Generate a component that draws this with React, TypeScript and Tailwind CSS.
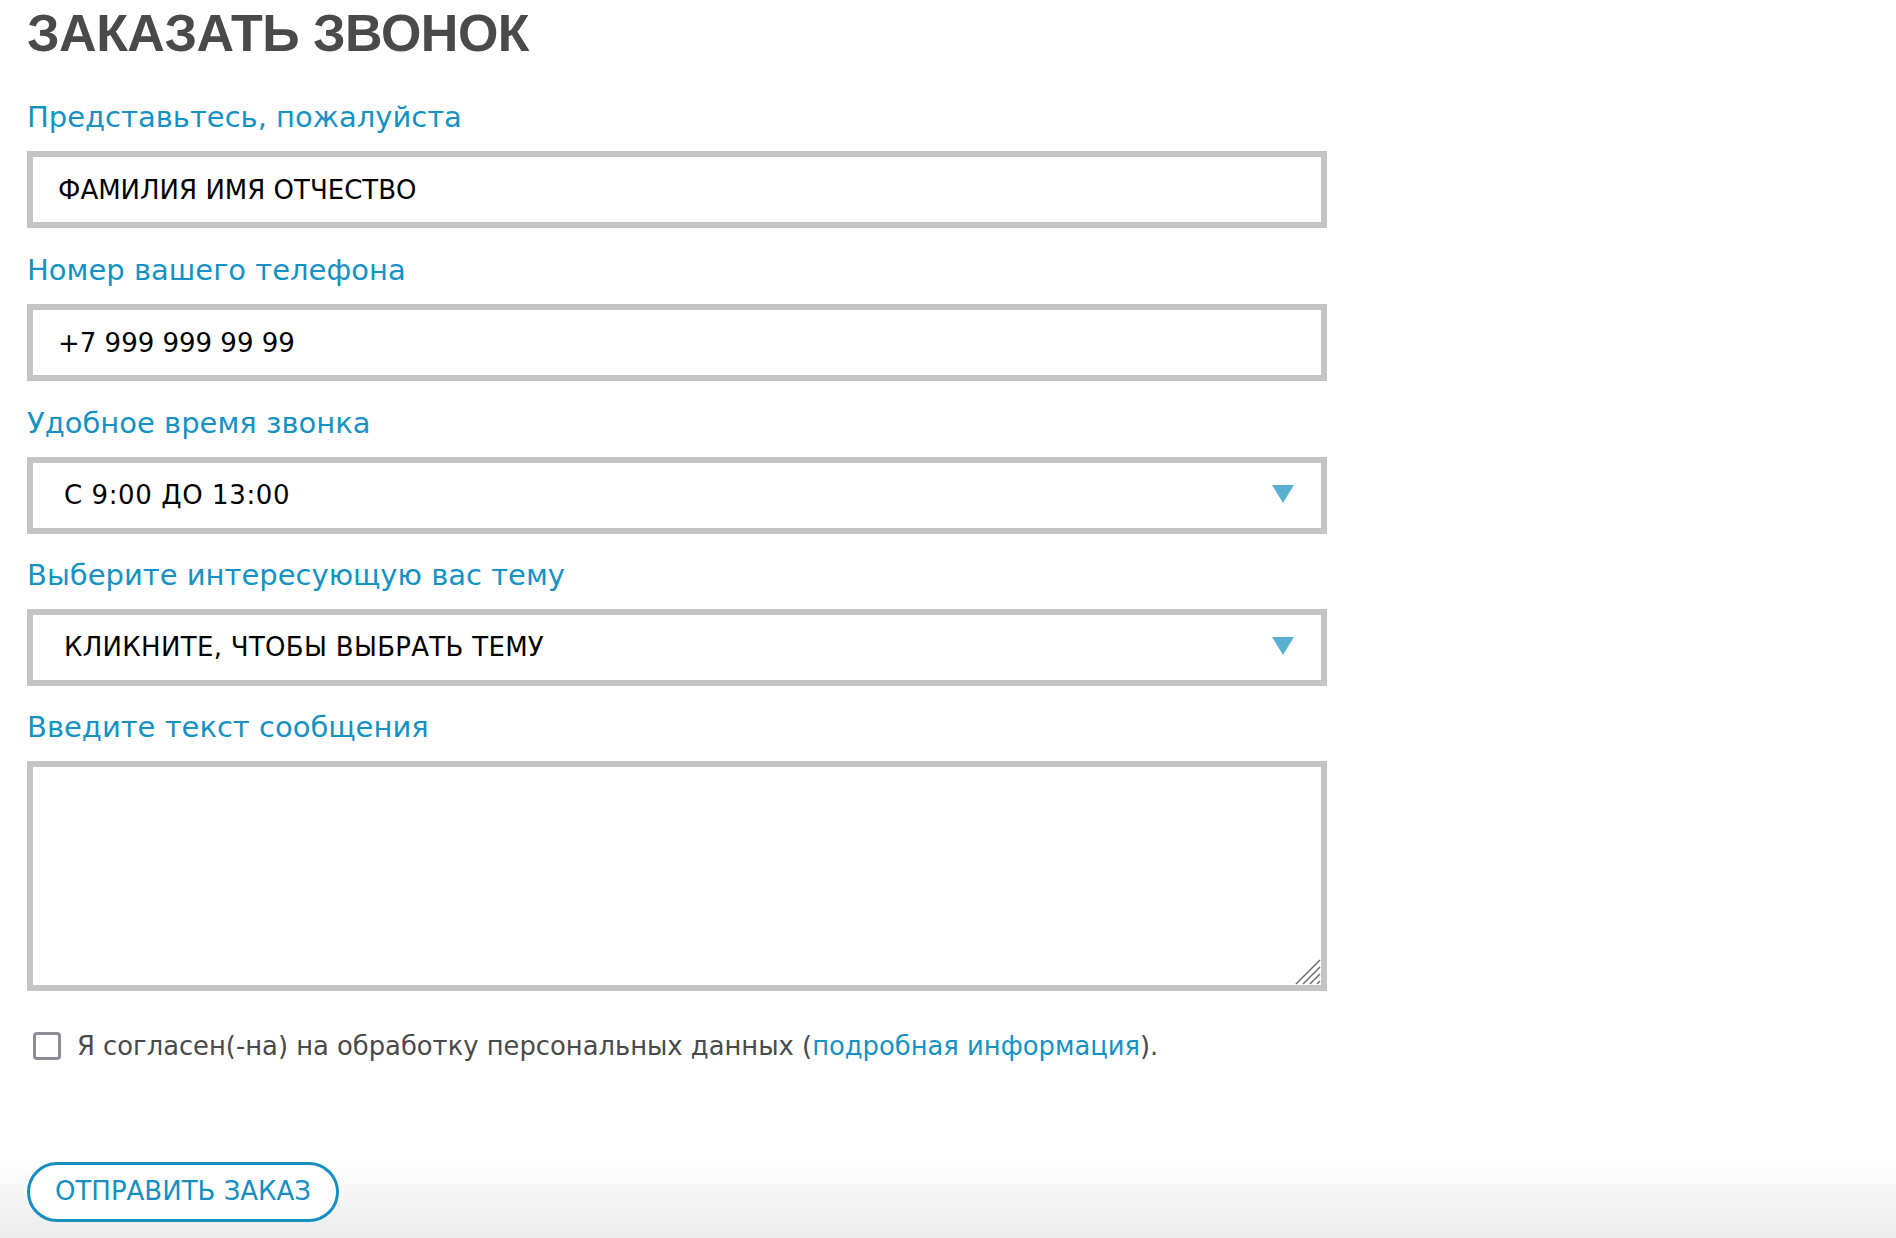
import { useState } from "react";

const labelCls =
  "block h-[36px] leading-[36px] text-[29px] text-[#1592c4] mb-[16px]";
const boxCls =
  "w-full h-[77px] border-[6px] border-[#c4c4c4] bg-white text-[26px] text-black outline-none";

function Arrow() {
  return (
    <svg
      width="22"
      height="18"
      viewBox="0 0 22 18"
      className="absolute right-[33px] top-[28px] pointer-events-none"
    >
      <polygon points="0,0 22,0 11,18" fill="#5aafd0" />
    </svg>
  );
}

export default function App() {
  const [time, setTime] = useState("9-13");
  const [topic, setTopic] = useState("");
  const [agree, setAgree] = useState(false);

  return (
    <div
      className="min-h-screen bg-[linear-gradient(to_bottom,#ffffff_calc(100%-80px),#ebebeb)]"
      style={{ fontFamily: '"DejaVu Sans", Verdana, sans-serif' }}
    >
      <div className="w-[1327px] pl-[27px] pt-[7px]">
        {/* Header */}
        <h1
          className="text-[52px] leading-[52px] font-bold text-[#4a4a4a] tracking-[-0.5px] mb-[40px]"
          style={{ fontFamily: '"Liberation Sans", Arial, sans-serif' }}
        >
          ЗАКАЗАТЬ ЗВОНОК
        </h1>

        <form onSubmit={(e) => e.preventDefault()} className="flex flex-col">
          <div className="mb-[24px]">
            <label className={labelCls}>Представьтесь, пожалуйста</label>
            <input
              type="text"
              placeholder="ФАМИЛИЯ ИМЯ ОТЧЕСТВО"
              className={`${boxCls} px-[25px] placeholder:text-black`}
            />
          </div>

          <div className="mb-[24px]">
            <label className={labelCls}>Номер вашего телефона</label>
            <input
              type="tel"
              placeholder="+7 999 999 99 99"
              className={`${boxCls} px-[25px] placeholder:text-black`}
            />
          </div>

          <div className="mb-[23px]">
            <label className={labelCls}>Удобное время звонка</label>
            <div className="relative">
              <select
                value={time}
                onChange={(e) => setTime(e.target.value)}
                className={`${boxCls} appearance-none pl-[31px] pr-[70px] tracking-[0.6px]`}
              >
                <option value="9-13">С 9:00 ДО 13:00</option>
                <option value="13-18">С 13:00 ДО 18:00</option>
              </select>
              <Arrow />
            </div>
          </div>

          <div className="mb-[23px]">
            <label className={labelCls}>Выберите интересующую вас тему</label>
            <div className="relative">
              <select
                value={topic}
                onChange={(e) => setTopic(e.target.value)}
                className={`${boxCls} appearance-none pl-[31px] pr-[70px] tracking-[0.3px]`}
              >
                <option value="">КЛИКНИТЕ, ЧТОБЫ ВЫБРАТЬ ТЕМУ</option>
                <option value="order">Заказ</option>
                <option value="other">Другое</option>
              </select>
              <Arrow />
            </div>
          </div>

          <div>
            <label className={labelCls}>Введите текст сообщения</label>
            <div className="relative">
              <textarea className="block w-full h-[230px] border-[6px] border-[#c4c4c4] bg-white text-[26px] p-[20px] outline-none resize-none" />
              {/* resize grip */}
              <svg
                width="26"
                height="26"
                viewBox="0 0 26 26"
                className="absolute right-[6px] bottom-[6px] pointer-events-none"
              >
                <g stroke="#6f6f6f" strokeWidth="1.6">
                  <line x1="25" y1="1" x2="1" y2="25" />
                  <line x1="25" y1="8" x2="8" y2="25" />
                  <line x1="25" y1="15" x2="15" y2="25" />
                  <line x1="25" y1="22" x2="22" y2="25" />
                </g>
              </svg>
            </div>
          </div>

          {/* Agreement */}
          <label className="flex items-center mt-[36px] ml-[6px] text-[25.8px] text-[#4a4a4a]">
            <input
              type="checkbox"
              checked={agree}
              onChange={(e) => setAgree(e.target.checked)}
              className="appearance-none shrink-0 w-[28px] h-[28px] border-[3px] border-[#8d8c99] rounded-[4px] bg-white checked:bg-[#1592c4] mr-[16px]"
            />
            <span>
              Я согласен(-на) на обработку персональных данных (
              <a href="#" className="text-[#1592c4]">
                подробная информация
              </a>
              ).
            </span>
          </label>

          <div className="mt-[96px]">
            <button
              type="submit"
              className="h-[60px] px-[25px] border-[3px] border-[#168fc0] rounded-full text-[26px] text-[#168fc0] bg-white"
            >
              ОТПРАВИТЬ ЗАКАЗ
            </button>
          </div>
        </form>
      </div>
    </div>
  );
}
